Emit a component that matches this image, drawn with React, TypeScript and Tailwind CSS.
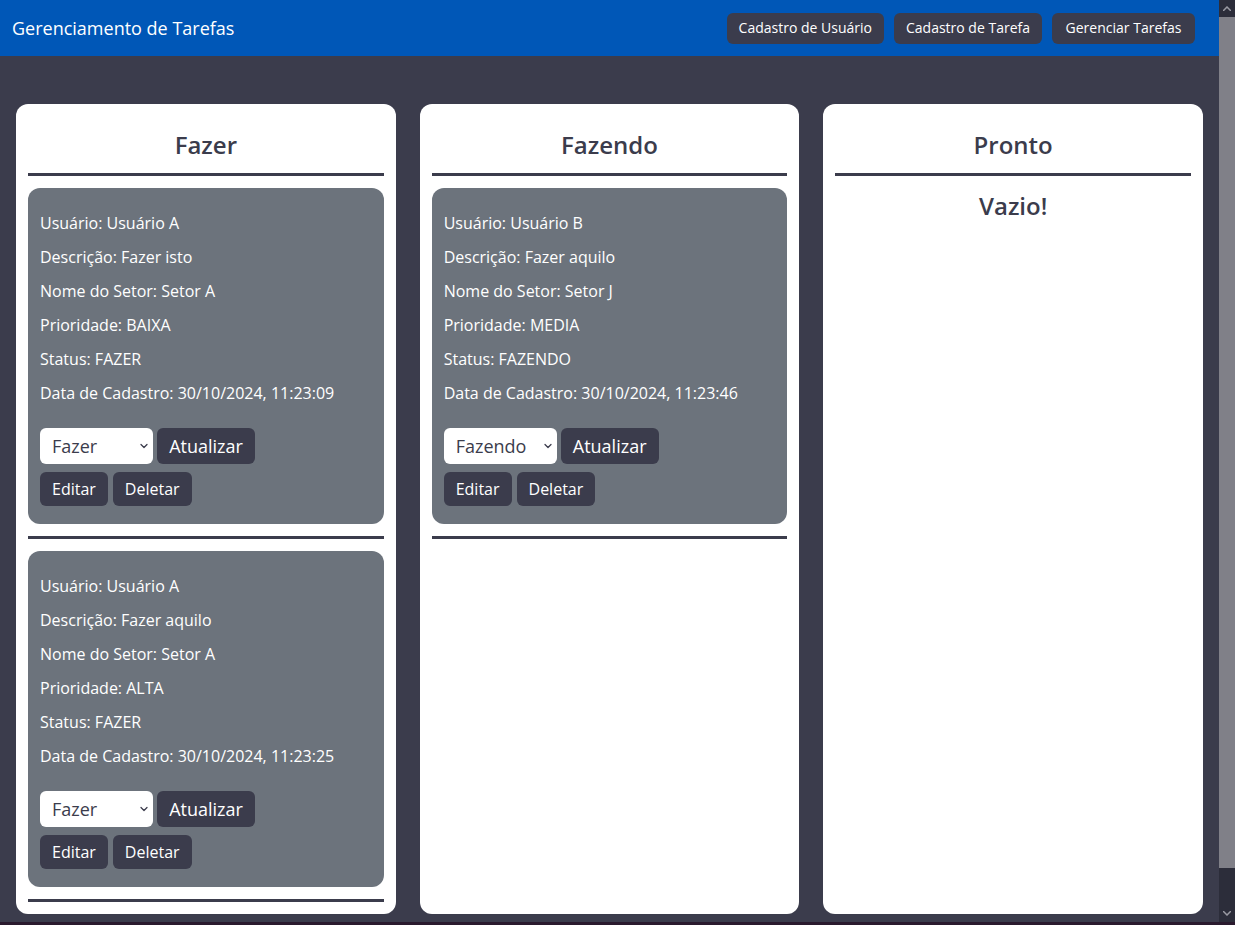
import { ChevronDown } from 'lucide-react';

type Task = {
  usuario: string;
  descricao: string;
  setor: string;
  prioridade: string;
  status: string;
  data: string;
  opcao: string;
};

const colunas: { titulo: string; tarefas: Task[] }[] = [
  {
    titulo: 'Fazer',
    tarefas: [
      {
        usuario: 'Usuário A',
        descricao: 'Fazer isto',
        setor: 'Setor A',
        prioridade: 'BAIXA',
        status: 'FAZER',
        data: '30/10/2024, 11:23:09',
        opcao: 'Fazer',
      },
      {
        usuario: 'Usuário A',
        descricao: 'Fazer aquilo',
        setor: 'Setor A',
        prioridade: 'ALTA',
        status: 'FAZER',
        data: '30/10/2024, 11:23:25',
        opcao: 'Fazer',
      },
    ],
  },
  {
    titulo: 'Fazendo',
    tarefas: [
      {
        usuario: 'Usuário B',
        descricao: 'Fazer aquilo',
        setor: 'Setor J',
        prioridade: 'MEDIA',
        status: 'FAZENDO',
        data: '30/10/2024, 11:23:46',
        opcao: 'Fazendo',
      },
    ],
  },
  { titulo: 'Pronto', tarefas: [] },
];

function Divisor() {
  return <div className="h-[3px] bg-[#3b3c4c]" />;
}

function Cartao({ tarefa }: { tarefa: Task }) {
  const linhas = [
    `Usuário: ${tarefa.usuario}`,
    `Descrição: ${tarefa.descricao}`,
    `Nome do Setor: ${tarefa.setor}`,
    `Prioridade: ${tarefa.prioridade}`,
    `Status: ${tarefa.status}`,
    `Data de Cadastro: ${tarefa.data}`,
  ];
  return (
    <div className="bg-[#6c737c] rounded-xl px-3 pt-6 pb-[18px] text-white">
      <div className="flex flex-col gap-3">
        {linhas.map((l, i) => (
          <p key={i} className="text-base leading-[22px]">{l}</p>
        ))}
      </div>
      <div className="mt-6 flex gap-1">
        <div className="relative w-[113px] h-9">
          <select
            defaultValue={tarefa.opcao}
            className="appearance-none w-full h-full bg-white text-[#3b3c4c] rounded-md pl-3 text-lg outline-none"
          >
            <option>Fazer</option>
            <option>Fazendo</option>
            <option>Pronto</option>
          </select>
          <ChevronDown className="absolute right-[3px] top-[12px] w-3 h-3 text-[#3b3c4c] pointer-events-none" strokeWidth={2.5} />
        </div>
        <button className="h-9 w-[98px] bg-[#3b3c4c] rounded-md text-lg">Atualizar</button>
      </div>
      <div className="mt-2 flex gap-[5px]">
        <button className="h-[34px] px-3 bg-[#3b3c4c] rounded-md text-base">Editar</button>
        <button className="h-[34px] px-3 bg-[#3b3c4c] rounded-md text-base">Deletar</button>
      </div>
    </div>
  );
}

export default function App() {
  return (
    <div className="h-[925px] overflow-hidden flex flex-col bg-[#3b3c4c]" style={{ fontFamily: '"Open Sans", "Noto Sans", sans-serif' }}>
      <div className="h-[922px] flex">
        <div className="flex-1 flex flex-col">
          <header className="h-14 shrink-0 bg-[#0057b7] flex items-center justify-between pl-3 pr-6">
            <h1 className="text-white text-lg">Gerenciamento de Tarefas</h1>
            <nav className="flex gap-[10px]">
              <button className="h-[31px] px-3 bg-[#3b3c4c] text-white text-sm rounded-md">Cadastro de Usuário</button>
              <button className="h-[31px] px-3 bg-[#3b3c4c] text-white text-sm rounded-md">Cadastro de Tarefa</button>
              <button className="h-[31px] w-[143px] bg-[#3b3c4c] text-white text-sm rounded-md">Gerenciar Tarefas</button>
            </nav>
          </header>
          <main className="flex-1 grid grid-cols-3 gap-6 px-4 pt-12 pb-2">
            {colunas.map((c) => (
              <section key={c.titulo} className="bg-white rounded-xl px-3 pb-3 flex flex-col gap-3 h-[810px]">
                <h2 className="pt-[25px] text-2xl leading-8 font-semibold text-[#3b3c4c] text-center">{c.titulo}</h2>
                <Divisor />
                {c.tarefas.length === 0 ? (
                  <p className="text-2xl leading-9 font-semibold text-[#3b3c4c] text-center">Vazio!</p>
                ) : (
                  c.tarefas.map((t, i) => (
                    <div key={i} className="flex flex-col gap-3">
                      <Cartao tarefa={t} />
                      <Divisor />
                    </div>
                  ))
                )}
              </section>
            ))}
          </main>
        </div>
        <div className="w-4 flex flex-col bg-[#2c2d3a]">
          <div className="h-[17px] flex items-center justify-center text-[#9a9aa3]">
            <svg width="8" height="5" viewBox="0 0 8 5"><path d="M0 5 L4 1 L8 5" fill="none" stroke="currentColor" strokeWidth="1.5" /></svg>
          </div>
          <div className="h-[851px] bg-[#808088]" />
          <div className="flex-1" />
          <div className="h-[17px] flex items-center justify-center text-[#9a9aa3]">
            <svg width="8" height="5" viewBox="0 0 8 5"><path d="M0 0 L4 4 L8 0" fill="none" stroke="currentColor" strokeWidth="1.5" /></svg>
          </div>
        </div>
      </div>
      <div className="h-[3px] bg-[#2a1a2e]" />
    </div>
  );
}
